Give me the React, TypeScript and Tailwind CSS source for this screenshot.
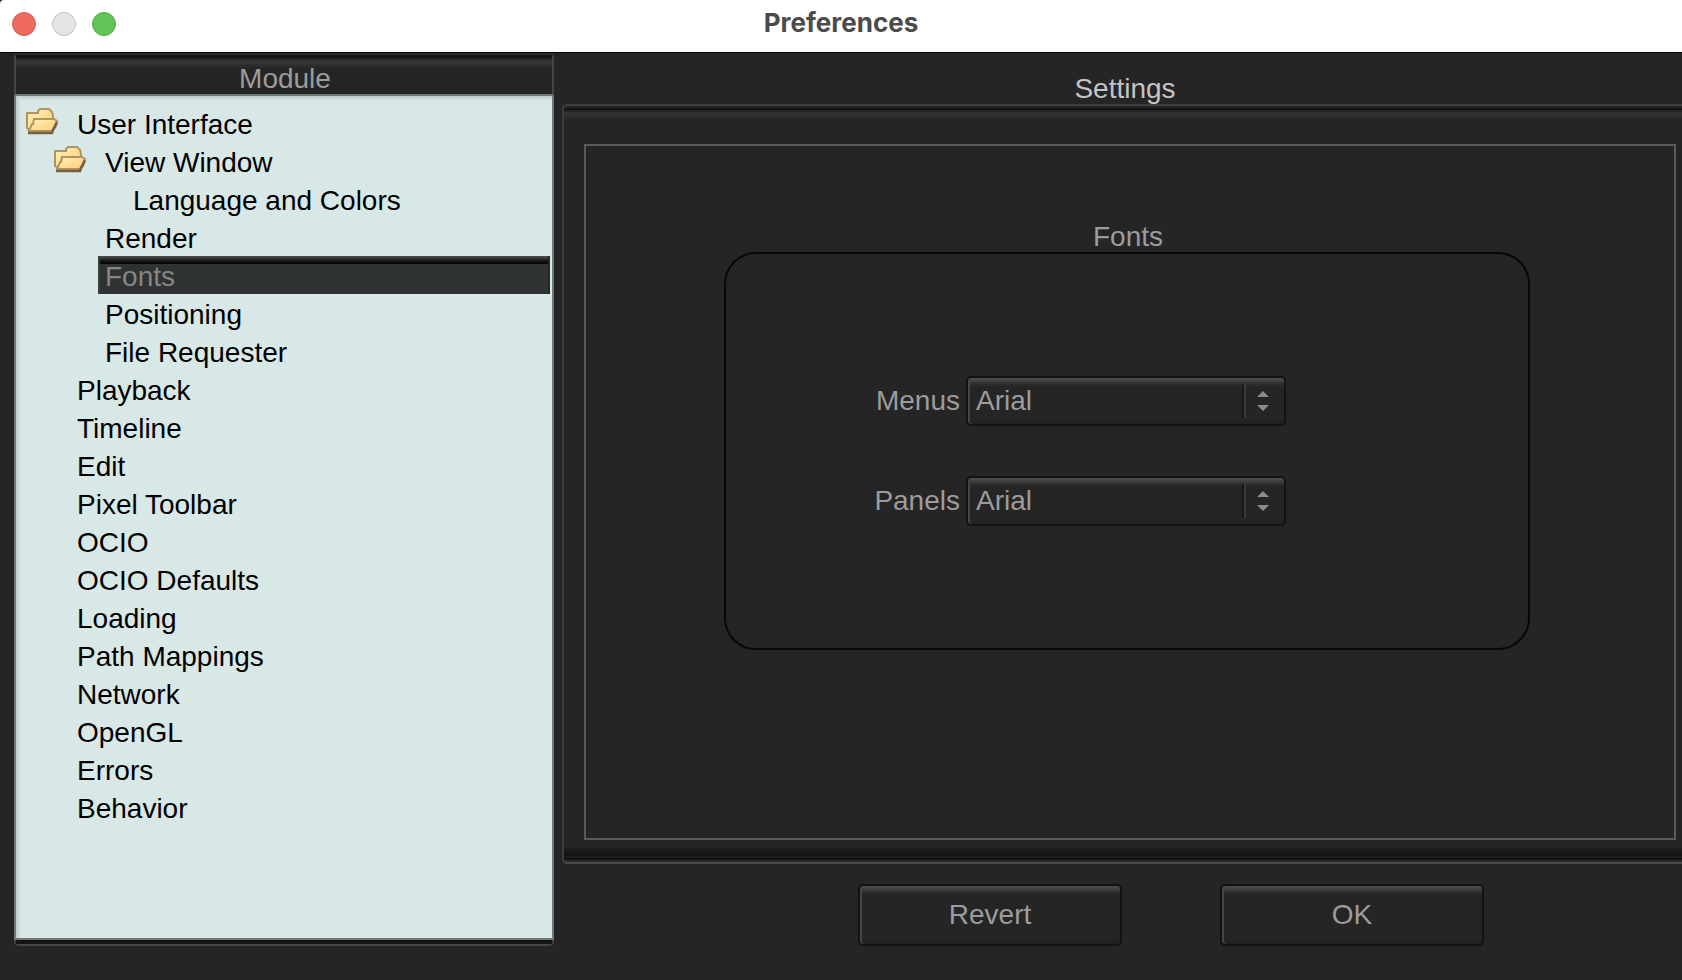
import React, { useState } from 'react';

type Item = { label: string; depth: 0 | 1 | 2; folder?: boolean };

const items: Item[] = [
  { label: 'User Interface', depth: 0, folder: true },
  { label: 'View Window', depth: 1, folder: true },
  { label: 'Language and Colors', depth: 2 },
  { label: 'Render', depth: 1 },
  { label: 'Fonts', depth: 1 },
  { label: 'Positioning', depth: 1 },
  { label: 'File Requester', depth: 1 },
  { label: 'Playback', depth: 0 },
  { label: 'Timeline', depth: 0 },
  { label: 'Edit', depth: 0 },
  { label: 'Pixel Toolbar', depth: 0 },
  { label: 'OCIO', depth: 0 },
  { label: 'OCIO Defaults', depth: 0 },
  { label: 'Loading', depth: 0 },
  { label: 'Path Mappings', depth: 0 },
  { label: 'Network', depth: 0 },
  { label: 'OpenGL', depth: 0 },
  { label: 'Errors', depth: 0 },
  { label: 'Behavior', depth: 0 },
];

const indent = { 0: 'pl-[10px]', 1: 'pl-[38px]', 2: 'pl-[66px]' };

function FolderIcon() {
  return (
    <svg width="32" height="28" viewBox="0 0 32 28" aria-hidden="true">
      <defs>
        <linearGradient id="folder" x1="0" y1="0" x2="1" y2="1">
          <stop offset="0" stopColor="#fff2b8" />
          <stop offset="0.500" stopColor="#ffdf98" />
          <stop offset="1" stopColor="#ffc878" />
        </linearGradient>
      </defs>
      <path d="M1 5H12V3L14 1H23L26 4L27 8V13L24 22H4L1 20Z" fill="url(#folder)" stroke="#b39363" strokeWidth="2" />
      <path d="M3 23L6 16H7L8 11H28L31 13L26 23Z" fill="url(#folder)" stroke="#b39363" strokeWidth="2" />
      <path d="M2 25H26L27 22L29 19L31 14" fill="none" stroke="#76603d" strokeWidth="2.500" />
    </svg>
  );
}

function TreeRow({ item, selected, onSelect }: { item: Item; selected: boolean; onSelect: () => void }) {
  return (
    <li className={`flex h-[38px] items-stretch pr-[2px] ${indent[item.depth]}`}>
      <span className="w-[44px] shrink-0 pt-1">{item.folder && <FolderIcon />}</span>
      <button
        type="button"
        onClick={onSelect}
        className={`flex-1 whitespace-nowrap pl-[7px] pt-1 text-left leading-[34px] ${
          selected
            ? 'bg-[linear-gradient(#454747_0_2px,#2b2c2c_2px_4px,#161717_4px_6px,#070707_6px_8px,#2f3232_8px)] text-[#858686] shadow-[inset_2px_0_#3c3e3e,inset_-2px_0_#262828]'
            : 'text-black'
        }`}
      >
        {item.label}
      </button>
    </li>
  );
}

const raised =
  'rounded-[5px] border-2 border-[#131313] bg-[linear-gradient(#4a4a4a_0_2px,#424242_2px_4px,#343434_4px_6px,#2b2b2b_6px_8px,#252525_8px,#252525_90%,#202020)] shadow-[inset_2px_0_#464646]';

function FontSelect({ id, label }: { id: string; label: string }) {
  return (
    <div className="flex items-center gap-[6px]">
      <label htmlFor={id} className="w-[100px] text-right">
        {label}
      </label>
      <div className="relative w-[320px]">
        <select id={id} defaultValue="Arial" className={`block h-[50px] w-full appearance-none pl-2 pr-[48px] leading-[42px] outline-none ${raised}`}>
          <option>Arial</option>
          <option>Courier</option>
          <option>Times</option>
        </select>
        <div className="pointer-events-none absolute inset-y-2 right-[2px] flex w-[42px] items-center border-l-2 border-[#171717]">
          <span className="h-full w-[2px] bg-[#3c3c3c]" />
          <svg className="ml-[11px]" width="12" height="20" viewBox="0 0 12 20" aria-hidden="true">
            <path d="M0 6L6 0L12 6ZM0 14H12L6 20Z" fill="#8c8c8c" />
          </svg>
        </div>
      </div>
    </div>
  );
}

export default function App() {
  const [selected, setSelected] = useState('Fonts');
  return (
    <div className="flex min-h-screen flex-col bg-[#252525] font-['Liberation_Sans',Arial,sans-serif] text-[28px] text-[#9c9c9c]">
      <header className="grid h-[53px] grid-cols-[1fr_auto_1fr] items-start rounded-tl-[4px] border-b border-black bg-white px-3">
        <div className="flex gap-4 pt-3">
          <button type="button" aria-label="Close" className="size-6 rounded-full border border-[#d9584e] bg-[#ec6a5e]" />
          <button type="button" aria-label="Minimize" className="size-6 rounded-full border border-[#c6c6c6] bg-[#e4e4e4]" />
          <button type="button" aria-label="Zoom" className="size-6 rounded-full border border-[#4fab41] bg-[#61c454]" />
        </div>
        <h1 className="font-['Inter',sans-serif] text-[26px] font-bold leading-[46px] text-[#4b4b4b]">Preferences</h1>
      </header>

      <main className="flex flex-1 gap-2 pl-[14px]">
        <nav aria-label="Module" className="mb-[34px] flex w-[540px] shrink-0 flex-col rounded-[5px] border-x-2 border-b-2 border-[#454545]">
          <h2 className="h-[41px] bg-[linear-gradient(#2b2b2b_0_2px,#141414_2px_5px,#252525_5px_7px,#333333_7px_10px,#2b2b2b_13px,#252525_16px)] pl-[2px] text-center leading-[51px]">
            Module
          </h2>
          <ul className="-mx-[2px] flex-1 rounded-t-[3px] border-2 border-[#707979] bg-[#d8e8e7] pt-2 shadow-[inset_2px_2px_#c3d0cf,inset_4px_4px_#cfdedd]">
            {items.map((item) => (
              <TreeRow key={item.label} item={item} selected={item.label === selected} onSelect={() => setSelected(item.label)} />
            ))}
          </ul>
          <div className="h-1 bg-[#141414]" />
        </nav>

        <section className="flex flex-1 flex-col">
          <h2 className="h-[51px] pl-[6px] text-center leading-[72px] text-[#c4c4c4]">Settings</h2>
          <div className="flex flex-1 flex-col rounded-l-[5px] border-y-2 border-l-2 border-t-[#3c3c3c] border-b-[#4a4a4a] border-l-[#3c3c3c] bg-[linear-gradient(#252525_0_2px,#131313_2px_4px,#252525_4px_6px,#323232_6px_8px,#303030_8px_10px,#252525_14px,transparent_14px),linear-gradient(to_top,#2b2b2b_0_2px,#111111_2px_4px,#1e1e1e_4px_6px,#151515_6px_8px,#252525_16px)] pb-[22px] pl-5 pr-[6px] pt-[38px]">
            <div className="flex flex-1 flex-col border-2 border-[#5a5a5a] pb-[188px] pl-[138px] pr-[144px] pt-[70px]">
              <fieldset className="flex flex-1 flex-col">
                <legend className="mx-auto h-[36px] pl-[2px] leading-[42px]">Fonts</legend>
                <div className="flex flex-1 flex-col items-center justify-center gap-[50px] rounded-[32px] border-2 border-[#080808] pr-[108px]">
                  <FontSelect id="menus-font" label="Menus" />
                  <FontSelect id="panels-font" label="Panels" />
                </div>
              </fieldset>
            </div>
          </div>
          <footer className="flex justify-center gap-[98px] pb-[34px] pl-[98px] pt-5">
            <button type="button" className={`h-[62px] w-[264px] leading-[58px] ${raised}`}>
              Revert
            </button>
            <button type="button" className={`h-[62px] w-[264px] leading-[58px] ${raised}`}>
              OK
            </button>
          </footer>
        </section>
      </main>
    </div>
  );
}
